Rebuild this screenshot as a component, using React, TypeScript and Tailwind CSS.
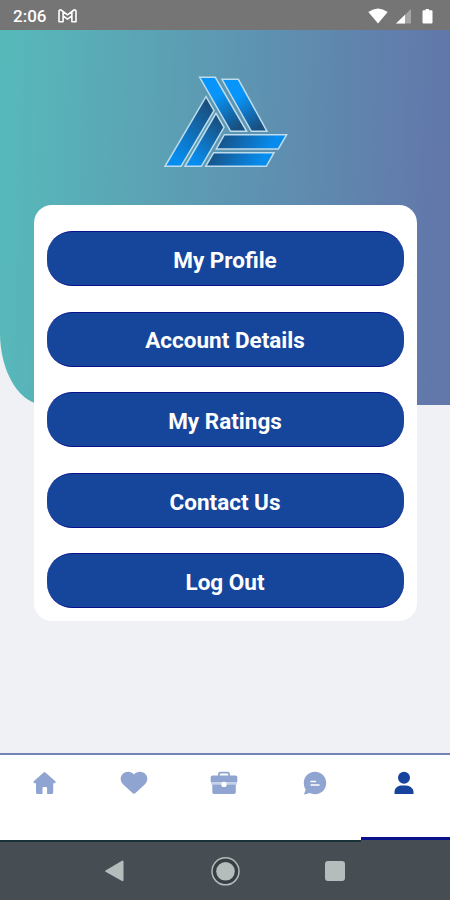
import React from "react";

const actions = ["My Profile", "Account Details", "My Ratings", "Contact Us", "Log Out"];

function StatusBar() {
  return (
    <header className="flex h-[30px] shrink-0 items-center bg-[#757575] pl-[13px] pr-[17px] pt-[2px] text-white">
      <span className="w-[45px] text-[17px] font-medium leading-5">2:06</span>
      <svg className="h-[14px] w-[19px]" viewBox="0 0 19 14" fill="none" stroke="#fff" strokeWidth="1.6" strokeLinejoin="round">
        <path d="M1 2.4Q1.1.5 3 1L9.5 5.8 16 1Q17.9.5 18 2.4V12.8H13.9V6.9L9.5 10.2 5.1 6.9V12.8H1ZM5.1 3V6.5M13.9 3V6.5" />
      </svg>
      <div className="ml-auto flex items-center">
        <svg className="h-[16px] w-[65px]" viewBox="0 0 65 16">
          <path d="M.3 4Q10-3.2 19.7 4L10 15.6Z" fill="#fff" />
          <path d="M43 1V15.5H28Z" fill="#a5a5a5" />
          <path d="M37 6.8V15.5H28Z" fill="#fff" />
          <path d="M57.500 1H61V2.300H63.500Q64.500 2.300 64.500 3.300V14.500Q64.500 15.500 63.500 15.500H55.500Q54.500 15.500 54.500 14.500V3.300Q54.500 2.300 55.500 2.300H57.500Z" fill="#fff" />
        </svg>
      </div>
    </header>
  );
}

function Logo() {
  return (
    <svg className="ml-[2px] h-[94px] w-[128px]" viewBox="36 30 384 282" stroke="#bddced" strokeWidth="4.5">
      <defs>
        <linearGradient id="down" x1="0" y1="0" x2="0.7" y2="1">
          <stop offset="0.4" stopColor="#0795fb" />
          <stop offset="1" stopColor="#194f80" />
        </linearGradient>
        <linearGradient id="up" x1="0.15" y1="1" x2="0.8" y2="0">
          <stop offset="0.1" stopColor="#078df0" />
          <stop offset="1" stopColor="#1b4c78" />
        </linearGradient>
        <linearGradient id="side" x1="0" y1="0" x2="1" y2="0.1">
          <stop offset="0" stopColor="#194c7c" />
          <stop offset="0.85" stopColor="#078bec" />
        </linearGradient>
      </defs>
      <path d="M149 37H196L290 199H242Z" fill="url(#down)" />
      <path d="M216 43H265L351 199H304Z" fill="url(#down)" />
      <path d="M168 95L192 137 93 304H45Z" fill="url(#up)" />
      <path d="M198 145L222 187 154 304H105Z" fill="url(#up)" />
      <path d="M223 209H410L385 252H199Z" fill="url(#side)" />
      <path d="M191 263H372L349 304H167Z" fill="url(#side)" />
    </svg>
  );
}

function TabBar() {
  return (
    <nav className="grid h-[87px] shrink-0 grid-cols-[89px_90px_90px_91px_1fr] border-t-2 border-[#7383b5] bg-white text-[#8fa4d0]">
      <a className="flex justify-center pt-[16px]">
        <svg className="h-[24px] w-[24px]" viewBox="0 0 24 24" fill="currentColor">
          <path d="M10.600 1.500Q11.500.6 12.400 1.500L22.300 10.300Q23.300 11.700 21.700 12.200H20.200V21.500Q20.200 23 18.700 23H14.100V17.200Q14.100 16 12.900 16H10.700Q9.500 16 9.500 17.200V23H4.500Q3 23 3 21.500V12.200H1.500Q-.2 11.700.8 10.300Z" />
        </svg>
      </a>
      <a className="flex justify-center pt-[16px]">
        <svg className="h-[24px] w-[28px]" viewBox="0 0 28 24" fill="currentColor">
          <path d="M14 3.500C11-.2 5-.1 2.200 3.500-.3 6.700.5 10.800 3 13.200L12.500 22.100Q14 23.500 15.500 22.100L25 13.200C27.500 10.800 28.300 6.700 25.800 3.500 23-.1 17-.2 14 3.500Z" />
        </svg>
      </a>
      <a className="flex justify-center pt-[16px]">
        <svg className="h-[24px] w-[28px]" viewBox="0 0 28 24" fill="currentColor">
          <path d="M9 5V3Q9 1.700 10.300 1.700H17.700Q19 1.700 19 3V5" fill="none" stroke="currentColor" strokeWidth="1.800" />
          <path d="M2.500 4.500H25.500Q27.300 4.500 27.300 6.300V11H.7V6.300Q.7 4.500 2.500 4.500Z" />
          <path d="M1 11H27V13.600H1Z" fill="#c7d2e9" />
          <path d="M2.300 13.600H25.800V21Q25.800 23 24 23H4Q2.300 23 2.300 21Z" />
          <circle cx="14" cy="13.400" r="2.700" fill="#fff" />
        </svg>
      </a>
      <a className="flex justify-center pt-[16px]">
        <svg className="h-[24px] w-[24px]" viewBox="0 0 24 24" fill="currentColor">
          <path d="M12 .8C18.500.8 23.200 5.800 23.200 12S18.500 23.200 12 23.200C9.800 23.200 8.200 22.800 6.800 22.100L1.600 23.400Q.8 23.400 1.300 22.500L2.700 18.600C1.400 16.700.8 14.500.8 12 .8 5.800 5.500.8 12 .8Z" />
          <path d="M8 10.600H12.500M8 14H16" stroke="#fff" strokeWidth="1.500" strokeLinecap="round" />
        </svg>
      </a>
      <a className="flex flex-col items-center justify-between pt-[16px]">
        <svg className="mr-[2px] h-[24px] w-[20px]" viewBox="0 0 20 24" fill="#16449d">
          <circle cx="10" cy="6.800" r="6" />
          <path d="M.5 22.900V21C.5 17 4 14.500 7.500 14.500H12C16 14.500 19.500 17.500 19.500 21V22.900Z" />
        </svg>
        <span className="ml-px h-[3px] self-stretch bg-[#08128c]" />
      </a>
    </nav>
  );
}

function SystemNavigation() {
  return (
    <footer className="flex h-[60px] shrink-0 flex-col bg-[#464e53]">
      <span className="h-[2px] w-[361px] bg-[#173238]" />
      <div className="flex flex-1 items-center justify-between pb-px pl-[104px] pr-[105px] text-[#b5bcbc]">
        <svg className="h-[22px] w-[20px]" viewBox="0 0 20 22" fill="currentColor">
          <path d="M1.500 10.400L18 .7Q19.500.3 19.500 1.900V20.100Q19.500 21.700 18 21L1.500 11.700Q.8 11.100 1.500 10.400Z" />
        </svg>
        <svg className="h-[30px] w-[30px]" viewBox="0 0 30 30">
          <circle cx="15.500" cy="15.300" r="13.500" fill="#354043" stroke="#b5bcbc" strokeWidth="1.500" />
          <circle cx="15.500" cy="15.300" r="9.300" fill="#b5bcbc" />
        </svg>
        <span className="h-[20px] w-[20px] rounded-[3px] bg-[#b5bcbc]" />
      </div>
    </footer>
  );
}

export default function App() {
  return (
    <div className="flex h-[900px] w-[450px] flex-col overflow-hidden bg-[#eff1f5] font-['Roboto',sans-serif]">
      <StatusBar />
      <main className="grid min-h-0 flex-1 grid-cols-1 grid-rows-1">
        <div className="col-start-1 row-start-1 h-[375px] rounded-bl-[45px_72px] bg-[linear-gradient(92deg,#57b8ba_3%,#5d98b2_48%,#6277aa_97%)]" />
        <div className="col-start-1 row-start-1 flex flex-col items-center pt-[45px]">
          <Logo />
          <section className="mt-[36px] flex h-[416px] w-[383px] flex-col gap-[25.600px] rounded-[18px] bg-white px-[13px] pt-[26px]">
            {actions.map((label) => (
              <button key={label} className="h-[55px] w-full shrink-0 rounded-[25px] border-y border-[#08128c] bg-[#16469b] pt-[3px] text-[22.500px] font-bold leading-none text-white">
                {label}
              </button>
            ))}
          </section>
        </div>
      </main>
      <TabBar />
      <SystemNavigation />
    </div>
  );
}
